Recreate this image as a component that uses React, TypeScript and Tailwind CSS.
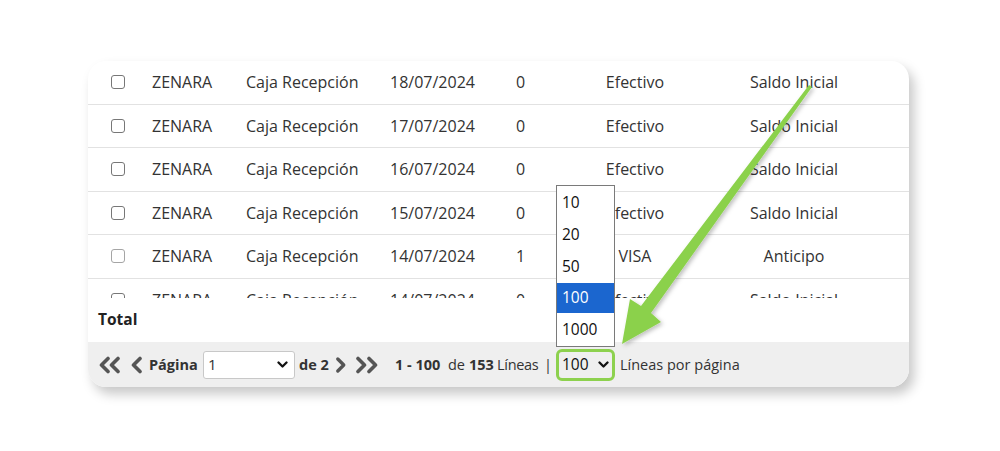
import React from "react";

const rows = [
  { date: "18/07/2024", n: "0", pay: "Efectivo", concept: "Saldo Inicial", dim: false },
  { date: "17/07/2024", n: "0", pay: "Efectivo", concept: "Saldo Inicial", dim: false },
  { date: "16/07/2024", n: "0", pay: "Efectivo", concept: "Saldo Inicial", dim: false },
  { date: "15/07/2024", n: "0", pay: "Efectivo", concept: "Saldo Inicial", dim: false },
  { date: "14/07/2024", n: "1", pay: "VISA", concept: "Anticipo", dim: true },
  { date: "14/07/2024", n: "0", pay: "Efectivo", concept: "Saldo Inicial", dim: false },
];

function Chevron({ dir, double }: { dir: "left" | "right"; double?: boolean }) {
  const a = dir === "left" ? "10,2.5 3.5,9 10,15.5" : "3,2.5 9.5,9 3,15.5";
  const b = dir === "left" ? "20,2.5 13.5,9 20,15.5" : "14,2.5 20.5,9 14,15.5";
  return (
    <svg width={double ? 24 : 13} height="18" viewBox={double ? "0 0 24 18" : "0 0 13 18"}>
      <polyline points={a} fill="none" stroke="#555" strokeWidth="3.6" strokeLinecap="round" strokeLinejoin="round" />
      {double && (
        <polyline points={b} fill="none" stroke="#555" strokeWidth="3.6" strokeLinecap="round" strokeLinejoin="round" />
      )}
    </svg>
  );
}

function Caret() {
  return (
    <svg width="11" height="8" viewBox="0 0 11 8">
      <polyline points="1.5,1.5 5.5,5.5 9.5,1.5" fill="none" stroke="#111" strokeWidth="2.3" strokeLinecap="round" strokeLinejoin="round" />
    </svg>
  );
}

export default function App() {
  return (
    <div
      className="relative w-[1000px] h-[451px] bg-white overflow-hidden text-[#333]"
      style={{ fontFamily: "'Open Sans', 'Noto Sans', sans-serif" }}
    >
      <div className="pt-[61px] pl-[88px]">
        <div className="w-[821px] h-[326px] bg-white rounded-[18px] shadow-[5px_7px_12px_rgba(0,0,0,0.22)] flex flex-col overflow-hidden">
          <div className="h-[237px] overflow-hidden">
            {rows.map((r, i) => (
              <div key={i} className="h-[43.5px] border-b border-[#e2e2e2] flex items-center text-[16px]">
                <div className="w-[64px] pl-[23px]">
                  <div
                    className={`w-[14px] h-[14px] border rounded-[3px] bg-white ${
                      r.dim ? "border-[#a5a5a5]" : "border-[#777]"
                    }`}
                  />
                </div>
                <div className="w-[94px]">ZENARA</div>
                <div className="w-[144px]">Caja Recepción</div>
                <div className="w-[126px]">{r.date}</div>
                <div className="w-[70px]">{r.n}</div>
                <div className="w-[98px] text-center">{r.pay}</div>
                <div className="w-[220px] text-center">{r.concept}</div>
              </div>
            ))}
          </div>
          <div className="h-[44px] flex items-center pl-[10px] text-[15.5px] font-bold text-[#222]">Total</div>
          <div className="flex-1 bg-[#efefef] flex items-center pl-[10px] text-[14.5px] text-[#333]">
            <div className="w-[24px] flex">
              <Chevron dir="left" double />
            </div>
            <div className="ml-[8px] w-[13px] flex">
              <Chevron dir="left" />
            </div>
            <div className="ml-[6px] w-[54px] font-bold">Página</div>
            <div className="w-[92px] h-[28px] bg-white border border-[#c8c8c8] rounded-[3px] flex items-center justify-between pl-[4px] pr-[6px]">
              <span className="text-[15px]">1</span>
              <Caret />
            </div>
            <div className="ml-[4px] w-[36px] font-bold">de 2</div>
            <div className="w-[12px] flex">
              <Chevron dir="right" />
            </div>
            <div className="ml-[8px] w-[24px] flex">
              <Chevron dir="right" double />
            </div>
            <div className="ml-[16px] w-[53px] font-bold whitespace-nowrap">1 - 100</div>
            <div className="w-[21px]">de</div>
            <div className="w-[28px] font-bold">153</div>
            <div className="w-[47px] tracking-[-0.3px]">Líneas</div>
            <div className="w-[12px]">|</div>
            <div className="relative w-[59px] h-[32px] border-[3px] border-[#8dd14e] rounded-[6px] flex items-center justify-between pl-[3px] pr-[3px] bg-[#efefef]">
              <span className="text-[15.5px] text-[#111]">100</span>
              <Caret />
              <div className="absolute left-[-3px] bottom-[31px] w-[59px] bg-white border border-[#7a7a7a] text-[15.5px] text-[#111] flex flex-col">
                <div className="h-[32.5px] flex items-center pl-[5px] pt-[2px]">10</div>
                <div className="h-[32.5px] flex items-center pl-[5px]">20</div>
                <div className="h-[32.5px] flex items-center pl-[5px]">50</div>
                <div className="h-[30px] flex items-center pl-[5px] bg-[#1b66cf] text-white">100</div>
                <div className="h-[32.5px] flex items-center pl-[5px]">1000</div>
              </div>
            </div>
            <div className="ml-[5px]">Líneas por página</div>
          </div>
        </div>
      </div>
      <svg className="absolute left-0 top-0 pointer-events-none" width="1000" height="451" viewBox="0 0 1000 451">
        <defs>
          <filter id="sh" x="-20%" y="-20%" width="140%" height="140%">
            <feDropShadow dx="2" dy="2" stdDeviation="2" floodColor="#000" floodOpacity="0.25" />
          </filter>
        </defs>
        <polygon
          points="809,85 812,87 651,313 661,322 622,344 630,299 641,306"
          fill="#8bd14b"
          filter="url(#sh)"
        />
      </svg>
    </div>
  );
}
